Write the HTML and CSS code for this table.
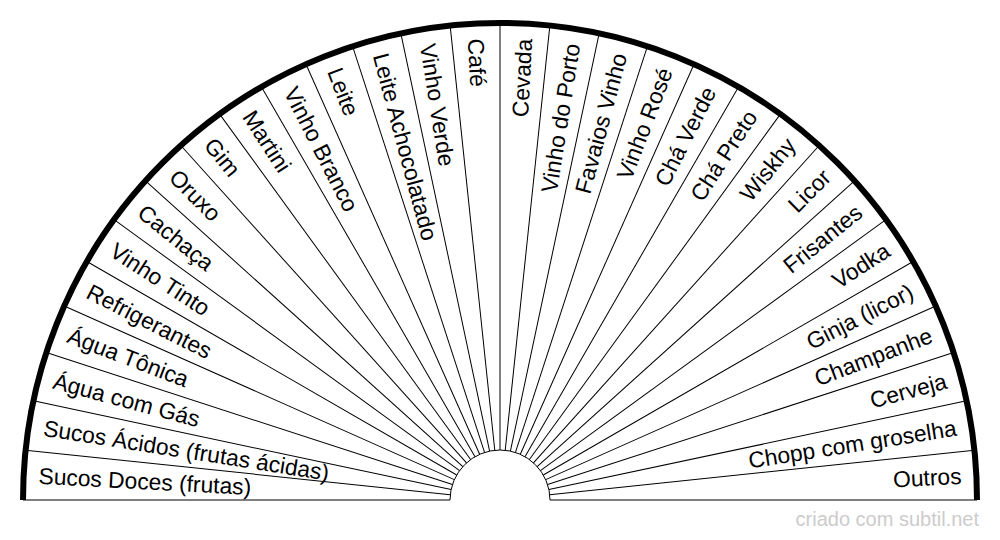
FILE: index.html
```html
<!DOCTYPE html>
<html lang="pt">
<head>
<meta charset="utf-8">
<title>Bebidas</title>
<link rel="stylesheet" href="styles.css">
</head>
<body>
<div class="page">
<svg class="chart" width="1000" height="509" viewBox="0 0 1000 509" xmlns="http://www.w3.org/2000/svg">
  <g class="spokes">
    <line x1="550" y1="500" x2="977" y2="500" transform="rotate(0 500 500)"/>
    <line x1="550" y1="500" x2="977" y2="500" transform="rotate(-6 500 500)"/>
    <line x1="550" y1="500" x2="977" y2="500" transform="rotate(-12 500 500)"/>
    <line x1="550" y1="500" x2="977" y2="500" transform="rotate(-18 500 500)"/>
    <line x1="550" y1="500" x2="977" y2="500" transform="rotate(-24 500 500)"/>
    <line x1="550" y1="500" x2="977" y2="500" transform="rotate(-30 500 500)"/>
    <line x1="550" y1="500" x2="977" y2="500" transform="rotate(-36 500 500)"/>
    <line x1="550" y1="500" x2="977" y2="500" transform="rotate(-42 500 500)"/>
    <line x1="550" y1="500" x2="977" y2="500" transform="rotate(-48 500 500)"/>
    <line x1="550" y1="500" x2="977" y2="500" transform="rotate(-54 500 500)"/>
    <line x1="550" y1="500" x2="977" y2="500" transform="rotate(-60 500 500)"/>
    <line x1="550" y1="500" x2="977" y2="500" transform="rotate(-66 500 500)"/>
    <line x1="550" y1="500" x2="977" y2="500" transform="rotate(-72 500 500)"/>
    <line x1="550" y1="500" x2="977" y2="500" transform="rotate(-78 500 500)"/>
    <line x1="550" y1="500" x2="977" y2="500" transform="rotate(-84 500 500)"/>
    <line x1="550" y1="500" x2="977" y2="500" transform="rotate(-90 500 500)"/>
    <line x1="550" y1="500" x2="977" y2="500" transform="rotate(-96 500 500)"/>
    <line x1="550" y1="500" x2="977" y2="500" transform="rotate(-102 500 500)"/>
    <line x1="550" y1="500" x2="977" y2="500" transform="rotate(-108 500 500)"/>
    <line x1="550" y1="500" x2="977" y2="500" transform="rotate(-114 500 500)"/>
    <line x1="550" y1="500" x2="977" y2="500" transform="rotate(-120 500 500)"/>
    <line x1="550" y1="500" x2="977" y2="500" transform="rotate(-126 500 500)"/>
    <line x1="550" y1="500" x2="977" y2="500" transform="rotate(-132 500 500)"/>
    <line x1="550" y1="500" x2="977" y2="500" transform="rotate(-138 500 500)"/>
    <line x1="550" y1="500" x2="977" y2="500" transform="rotate(-144 500 500)"/>
    <line x1="550" y1="500" x2="977" y2="500" transform="rotate(-150 500 500)"/>
    <line x1="550" y1="500" x2="977" y2="500" transform="rotate(-156 500 500)"/>
    <line x1="550" y1="500" x2="977" y2="500" transform="rotate(-162 500 500)"/>
    <line x1="550" y1="500" x2="977" y2="500" transform="rotate(-168 500 500)"/>
    <line x1="550" y1="500" x2="977" y2="500" transform="rotate(-174 500 500)"/>
    <line x1="550" y1="500" x2="977" y2="500" transform="rotate(-180 500 500)"/>
  </g>
  <path class="inner" d="M 450 500 A 50 50 0 0 1 550 500"/>
  <path class="outer" d="M 23 500 A 477 477 0 0 1 977 500"/>
  <g class="labels left">
    <text x="38" y="500" transform="rotate(3 500 500)">Sucos Doces (frutas)</text>
    <text x="38" y="500" transform="rotate(9 500 500)">Sucos Ácidos (frutas ácidas)</text>
    <text x="38" y="500" transform="rotate(15 500 500)">Água com Gás</text>
    <text x="38" y="500" transform="rotate(21 500 500)">Água Tônica</text>
    <text x="38" y="500" transform="rotate(27 500 500)">Refrigerantes</text>
    <text x="38" y="500" transform="rotate(33 500 500)">Vinho Tinto</text>
    <text x="38" y="500" transform="rotate(39 500 500)">Cachaça</text>
    <text x="38" y="500" transform="rotate(45 500 500)">Oruxo</text>
    <text x="38" y="500" transform="rotate(51 500 500)">Gim</text>
    <text x="38" y="500" transform="rotate(57 500 500)">Martini</text>
    <text x="38" y="500" transform="rotate(63 500 500)">Vinho Branco</text>
    <text x="38" y="500" transform="rotate(69 500 500)">Leite</text>
    <text x="38" y="500" transform="rotate(75 500 500)">Leite Achocolatado</text>
    <text x="38" y="500" transform="rotate(81 500 500)">Vinho Verde</text>
    <text x="38" y="500" transform="rotate(87 500 500)">Café</text>
  </g>
  <g class="labels right">
    <text x="962" y="500" transform="rotate(-87 500 500)">Cevada</text>
    <text x="962" y="500" transform="rotate(-81 500 500)">Vinho do Porto</text>
    <text x="962" y="500" transform="rotate(-75 500 500)">Favaios Vinho</text>
    <text x="962" y="500" transform="rotate(-69 500 500)">Vinho Rosé</text>
    <text x="962" y="500" transform="rotate(-63 500 500)">Chá Verde</text>
    <text x="962" y="500" transform="rotate(-57 500 500)">Chá Preto</text>
    <text x="962" y="500" transform="rotate(-51 500 500)">Wiskhy</text>
    <text x="962" y="500" transform="rotate(-45 500 500)">Licor</text>
    <text x="962" y="500" transform="rotate(-39 500 500)">Frisantes</text>
    <text x="962" y="500" transform="rotate(-33 500 500)">Vodka</text>
    <text x="962" y="500" transform="rotate(-27 500 500)">Ginja (licor)</text>
    <text x="962" y="500" transform="rotate(-21 500 500)">Champanhe</text>
    <text x="962" y="500" transform="rotate(-15 500 500)">Cerveja</text>
    <text x="962" y="500" transform="rotate(-9 500 500)">Chopp com groselha</text>
    <text x="962" y="500" transform="rotate(-3 500 500)">Outros</text>
  </g>
</svg>
<div class="credit">criado com subtil.net</div>
</div>
</body>
</html>
```

FILE: styles.css
```css
html, body {
  margin: 0;
  padding: 0;
  background: #ffffff;
}

.page {
  width: 1000px;
  height: 540px;
  overflow: hidden;
  font-family: "Liberation Sans", Arial, sans-serif;
}

.chart {
  display: block;
}

.spokes line {
  stroke: #000000;
  stroke-width: 1;
}

.inner {
  fill: none;
  stroke: #000000;
  stroke-width: 1;
}

.outer {
  fill: none;
  stroke: #000000;
  stroke-width: 6;
}

.labels text {
  font-family: "Liberation Sans", Arial, sans-serif;
  font-size: 22.8px;
  fill: #000000;
  dominant-baseline: central;
}

.labels.left text {
  text-anchor: start;
}

.labels.right text {
  text-anchor: end;
}

.credit {
  text-align: right;
  padding-right: 21px;
  font-size: 20px;
  line-height: 20px;
  color: #cccccc;
}
```
